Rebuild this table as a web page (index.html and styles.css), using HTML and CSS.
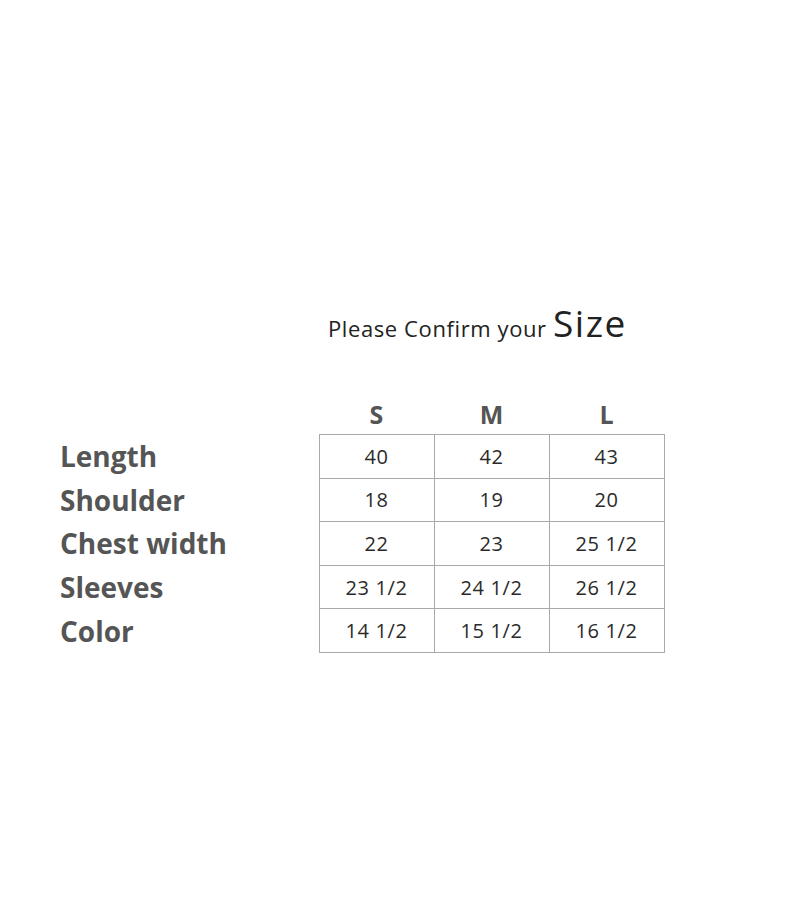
FILE: index.html
```html
<!DOCTYPE html>
<html>
<head>
<meta charset="utf-8">
<link rel="stylesheet" href="styles.css">
</head>
<body>
<div class="page">
  <h1 class="title"><span class="small">Please Confirm your </span><span class="big">Size</span></h1>
  <table class="chart">
    <thead>
      <tr><th class="corner"></th><th class="size">S</th><th class="size">M</th><th class="size">L</th></tr>
    </thead>
    <tbody>
      <tr><th class="label">Length</th><td>40</td><td>42</td><td>43</td></tr>
      <tr><th class="label">Shoulder</th><td>18</td><td>19</td><td>20</td></tr>
      <tr><th class="label">Chest width</th><td>22</td><td>23</td><td>25 1/2</td></tr>
      <tr><th class="label">Sleeves</th><td>23 1/2</td><td>24 1/2</td><td>26 1/2</td></tr>
      <tr><th class="label">Color</th><td>14 1/2</td><td>15 1/2</td><td>16 1/2</td></tr>
    </tbody>
  </table>
</div>
</body>
</html>
```
FILE: styles.css
```css
html, body {
  margin: 0;
  padding: 0;
  background: #ffffff;
}
body {
  font-family: "Open Sans", "Liberation Sans", sans-serif;
  color: #333;
}
.page {
  width: 800px;
  height: 900px;
  padding-top: 293px;
  box-sizing: border-box;
}
.title {
  margin: 0 0 0 328px;
  font-size: 37px;
  font-weight: 400;
  line-height: 60px;
  height: 66px;
  color: #222;
  white-space: nowrap;
}
.title .small {
  font-size: 22px;
  letter-spacing: 0.6px;
}
.title .big {
  font-size: 37px;
  letter-spacing: 1.5px;
}
.chart {
  margin: 35px 0 0 60px;
  border-collapse: collapse;
  table-layout: fixed;
}
.chart th, .chart td {
  padding: 0;
}
.corner {
  width: 259px;
}
.size {
  width: 115px;
  height: 40px;
  font-size: 25px;
  font-weight: 700;
  color: #555;
  text-align: center;
  vertical-align: middle;
}
.label {
  text-align: left;
  font-size: 28px;
  font-weight: 700;
  color: #555;
  white-space: nowrap;
}
.chart td {
  border: 1px solid #a9a9a9;
  height: 42.6px;
  text-align: center;
  font-size: 20px;
  color: #2a2a2a;
  letter-spacing: 0.6px;
}
```
